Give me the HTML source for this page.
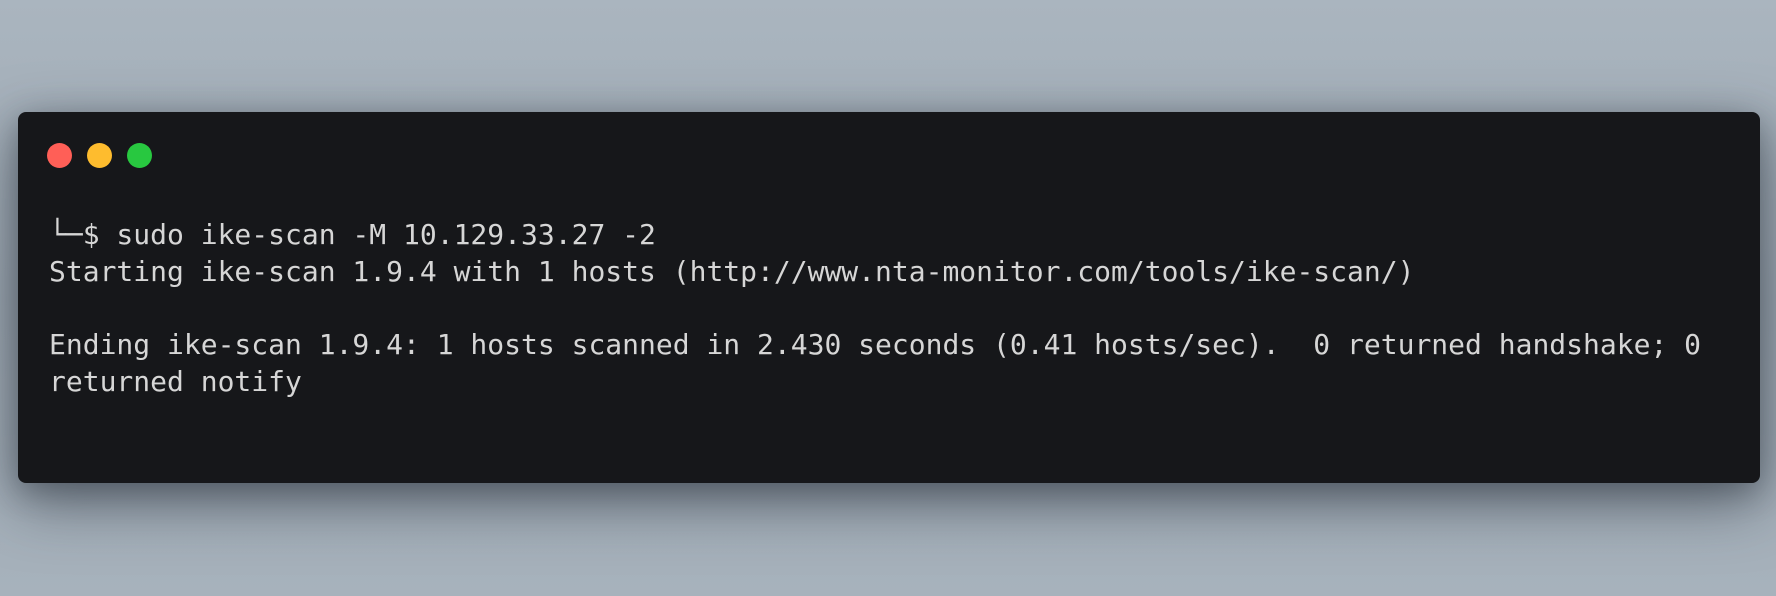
<!DOCTYPE html>
<html><head><meta charset="utf-8"><style>
html,body{margin:0;padding:0;}
body{width:1776px;height:596px;overflow:hidden;background:linear-gradient(180deg,#aab5bf 0%,#9ea9b3 50%,#a7b2bc 100%);position:relative;}
.win{position:absolute;left:18px;top:112px;width:1742px;height:371px;background:#16171a;border-radius:8px;box-shadow:0 20px 60px rgba(40,48,58,0.55),0 8px 30px rgba(40,48,58,0.35);}
.d{position:absolute;top:143px;width:25px;height:25px;border-radius:50%;}
pre{position:absolute;left:49px;top:217px;margin:0;font-family:"DejaVu Sans Mono","Liberation Mono",monospace;font-size:28px;line-height:36.7px;color:#d6d6d6;}
</style></head><body>
<div class="win"></div>
<div class="d" style="left:47px;background:#ff5f57"></div>
<div class="d" style="left:87px;background:#febc2e"></div>
<div class="d" style="left:127px;background:#28c840"></div>
<pre>└─$ sudo ike-scan -M 10.129.33.27 -2
Starting ike-scan 1.9.4 with 1 hosts (http://www.nta-monitor.com/tools/ike-scan/)

Ending ike-scan 1.9.4: 1 hosts scanned in 2.430 seconds (0.41 hosts/sec).  0 returned handshake; 0
returned notify</pre>
</body></html>
